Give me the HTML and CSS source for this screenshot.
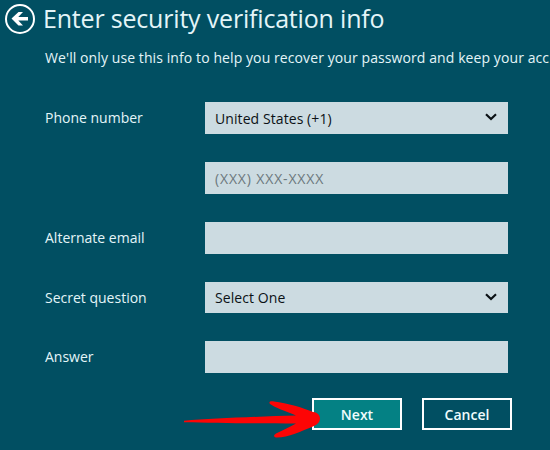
FILE: index.html
```
<!DOCTYPE html>
<html lang="en">
<head>
  <meta charset="UTF-8">
  <title>Enter security verification info</title>
  <link rel="stylesheet" href="styles.css">
</head>
<body>
  <header class="header">
    <button class="back" type="button" aria-label="Back">
      <svg width="32" height="32" viewBox="0 0 32 32">
        <circle cx="16" cy="16" r="14" fill="none" stroke="#fff" stroke-width="2"/>
        <path d="M7.500 15.500L14.500 9H19l-4.700 5H24v3.500h-9.700l4.700 5h-4.500z" fill="#fff"/>
      </svg>
    </button>
    <h1 class="title">Enter security verification info</h1>
  </header>
  <p class="intro">We'll only use this info to help you recover your password and keep your acc</p>

  <form class="form">
    <div class="row">
      <label for="country">Phone number</label>
      <div class="select">
        <select id="country" class="field">
          <option>United States (+1)</option>
        </select>
        <svg class="chevron" width="12" height="8" viewBox="0 0 12 8"><path d="M1 1.300l5 4.700 5-4.700" fill="none" stroke="#0b1115" stroke-width="2.200"/></svg>
      </div>
    </div>
    <div class="row">
      <span></span>
      <input class="field" type="tel" placeholder="(XXX) XXX-XXXX" aria-label="Phone number">
    </div>
    <div class="row">
      <label for="email">Alternate email</label>
      <input id="email" class="field" type="email">
    </div>
    <div class="row row-short">
      <label for="question">Secret question</label>
      <div class="select">
        <select id="question" class="field">
          <option>Select One</option>
        </select>
        <svg class="chevron" width="12" height="8" viewBox="0 0 12 8"><path d="M1 1.300l5 4.700 5-4.700" fill="none" stroke="#0b1115" stroke-width="2.200"/></svg>
      </div>
    </div>
    <div class="row">
      <label for="answer">Answer</label>
      <input id="answer" class="field" type="text">
    </div>
    <div class="buttons">
      <button class="btn btn-next" type="button">Next
        <svg class="arrow" width="138" height="40" viewBox="0 0 138 40">
          <path d="M1 20.700C30 18.500 75 16.500 113 15.500C102 11 92 7.500 87 4C85.500 2 87 1 91 1.500C104 3 121 8 130 12C134 12 137 15 137 18.500C137 22 134 25 130 26.500C119 31 105 37.500 94 37.500C90.500 37.500 90 35.500 93 33.500C100 30 107 27 113 23.400C76 23.400 30 23 1 22.200z" fill="#fd0505"/>
        </svg>
      </button>
      <button class="btn" type="button">Cancel</button>
    </div>
  </form>
</body>
</html>
```

FILE: styles.css
```
* {
  box-sizing: border-box;
}

body {
  margin: 0;
  height: 450px;
  overflow: hidden;
  background-color: #014f62;
  color: #e4f5f8;
  font-family: "Open Sans", "Noto Sans", sans-serif;
  font-size: 14px;
}

.header {
  display: flex;
  align-items: center;
  gap: 7px;
  height: 38px;
  padding-left: 4px;
}

.back {
  width: 32px;
  height: 32px;
  padding: 0;
  border: none;
  background: none;
}

.back svg {
  display: block;
}

.title {
  margin: 0;
  padding-bottom: 2px;
  font-size: 25px;
  font-weight: 400;
  letter-spacing: -0.19px;
  white-space: nowrap;
}

.intro {
  margin: 10px 0 0 45px;
  line-height: 20px;
  letter-spacing: 0.09px;
  white-space: nowrap;
}

.form {
  display: flex;
  flex-direction: column;
  gap: 28px;
  width: 512px;
  margin-top: 34px;
  padding-left: 45px;
}

.row {
  display: grid;
  grid-template-columns: 160px 303px;
  align-items: center;
  height: 32px;
}

.row label {
  padding-bottom: 2px;
}

.row-short {
  height: 31px;
}

.row-short label {
  padding-bottom: 0;
}

.field {
  display: block;
  width: 100%;
  height: 100%;
  padding: 0 10px;
  border: none;
  border-radius: 0;
  background-color: #ccdbe1;
  color: #0b1115;
  font: inherit;
  letter-spacing: 0.08px;
  appearance: none;
}

.field::placeholder {
  color: #6b777c;
  letter-spacing: 0.85px;
  opacity: 1;
}

.select {
  display: grid;
  align-items: center;
  height: 100%;
}

.select > * {
  grid-area: 1 / 1;
}

.chevron {
  justify-self: end;
  margin-right: 11px;
  margin-bottom: 2px;
  pointer-events: none;
}

.buttons {
  display: flex;
  justify-content: flex-end;
  gap: 20px;
  margin-top: -3px;
}

.btn {
  position: relative;
  width: 90px;
  height: 32px;
  padding: 0;
  border: 2px solid #fff;
  background-color: #014f62;
  color: #effcfd;
  font: inherit;
  font-weight: 600;
}

.btn-next {
  background-color: #048184;
}

/* pointer drawn over the edge of the Next button */
.arrow {
  position: absolute;
  top: 0;
  left: -131px;
}
```
